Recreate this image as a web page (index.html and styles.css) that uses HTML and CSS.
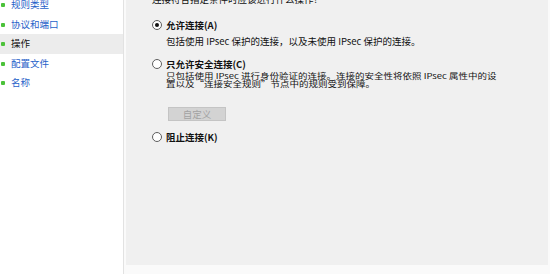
FILE: index.html
```html
<!DOCTYPE HTML>
<html lang="zh-CN">
  <head>
    <title>新建入站规则向导 - 操作</title>
    <link rel="stylesheet" href="styles.css">
  </head>
  <body>
    <div class="Window">
      <ul class="Steps">
        <li class="Step">规则类型</li>
        <li class="Step">协议和端口</li>
        <li class="Step Current">操作</li>
        <li class="Step">配置文件</li>
        <li class="Step">名称</li>
      </ul>
      <div class="Frame">
        <div class="Panel">
          <p class="Question">连接符合指定条件时应该进行什么操作?</p>

          <div class="Option First">
            <span class="Radio Checked"></span>
            <span class="Label">允许连接(A)</span>
          </div>
          <p class="Desc Single">包括使用 IPsec 保护的连接，以及未使用 IPsec 保护的连接。</p>

          <div class="Option Second">
            <span class="Radio"></span>
            <span class="Label">只允许安全连接(C)</span>
          </div>
          <p class="Desc Double">只包括使用 IPsec 进行身份验证的连接。连接的安全性将依照 IPsec 属性中的设<br>置以及“连接安全规则”节点中的规则受到保障。</p>
          <button class="Custom" disabled>自定义</button>

          <div class="Option Third">
            <span class="Radio"></span>
            <span class="Label">阻止连接(K)</span>
          </div>
        </div>
      </div>
    </div>
  </body>
</html>
```

FILE: styles.css
```css
* {
  margin: 0;
  padding: 0;
  box-sizing: border-box;
}

body {
  background: #fff;
  font-family: "Noto Sans CJK SC", "Noto Sans", sans-serif;
  font-size: 9.5px;
  color: #111;
  overflow: hidden;
}

.Window {
  display: flex;
  width: 550px;
  height: 274px;
}

.Steps {
  list-style: none;
  width: 123px;
  margin-top: -5px;
}

.Step {
  position: relative;
  height: 19.5px;
  line-height: 19.5px;
  padding-left: 11px;
  color: #1f62c9;
}

.Step::before {
  content: "";
  position: absolute;
  left: 1px;
  top: 8px;
  width: 4px;
  height: 4px;
  border-radius: 1px;
  background: #4cc23a;
}

.Step.Current {
  background: #ececec;
  color: #111;
}

.Frame {
  flex: 1;
  border-left: 1px solid #e2e2e2;
  padding: 0 2px 2px 2px;
  background: #fafafa;
}

.Panel {
  height: 100%;
  background: #f0f0f0;
  padding-left: 26px;
}

.Question {
  line-height: 12px;
  margin-top: -7px;
}

.Option {
  display: flex;
  align-items: center;
  height: 12px;
}

.Option.First {
  margin-top: 14px;
}

.Option.Second {
  margin-top: 11px;
}

.Option.Third {
  margin-top: 10.5px;
}

.Radio {
  position: relative;
  width: 10px;
  height: 10px;
  border: 1px solid #5e5e5e;
  border-radius: 50%;
  background: #fff;
}

.Radio.Checked::after {
  content: "";
  position: absolute;
  left: 2px;
  top: 2px;
  width: 4px;
  height: 4px;
  border-radius: 50%;
  background: #111;
}

.Label {
  margin-left: 4px;
  font-weight: bold;
}

.Desc {
  padding-left: 14px;
  white-space: nowrap;
}

.Desc.Single {
  line-height: 12px;
  margin-top: 4px;
}

/* the two-line text is packed tight in the dialog, glyphs squashed */
.Desc.Double {
  line-height: 9.6px;
  margin-top: 2.75px;
  transform: scaleY(0.78);
  transform-origin: 0 0;
}

.Custom {
  display: block;
  width: 58px;
  height: 14px;
  margin: 15px 0 0 16px;
  border: 1px solid #c4c4c4;
  background: #d3d3d3;
  color: #a2a2a2;
  font-family: inherit;
  font-size: 9.5px;
  line-height: 12px;
}
```
